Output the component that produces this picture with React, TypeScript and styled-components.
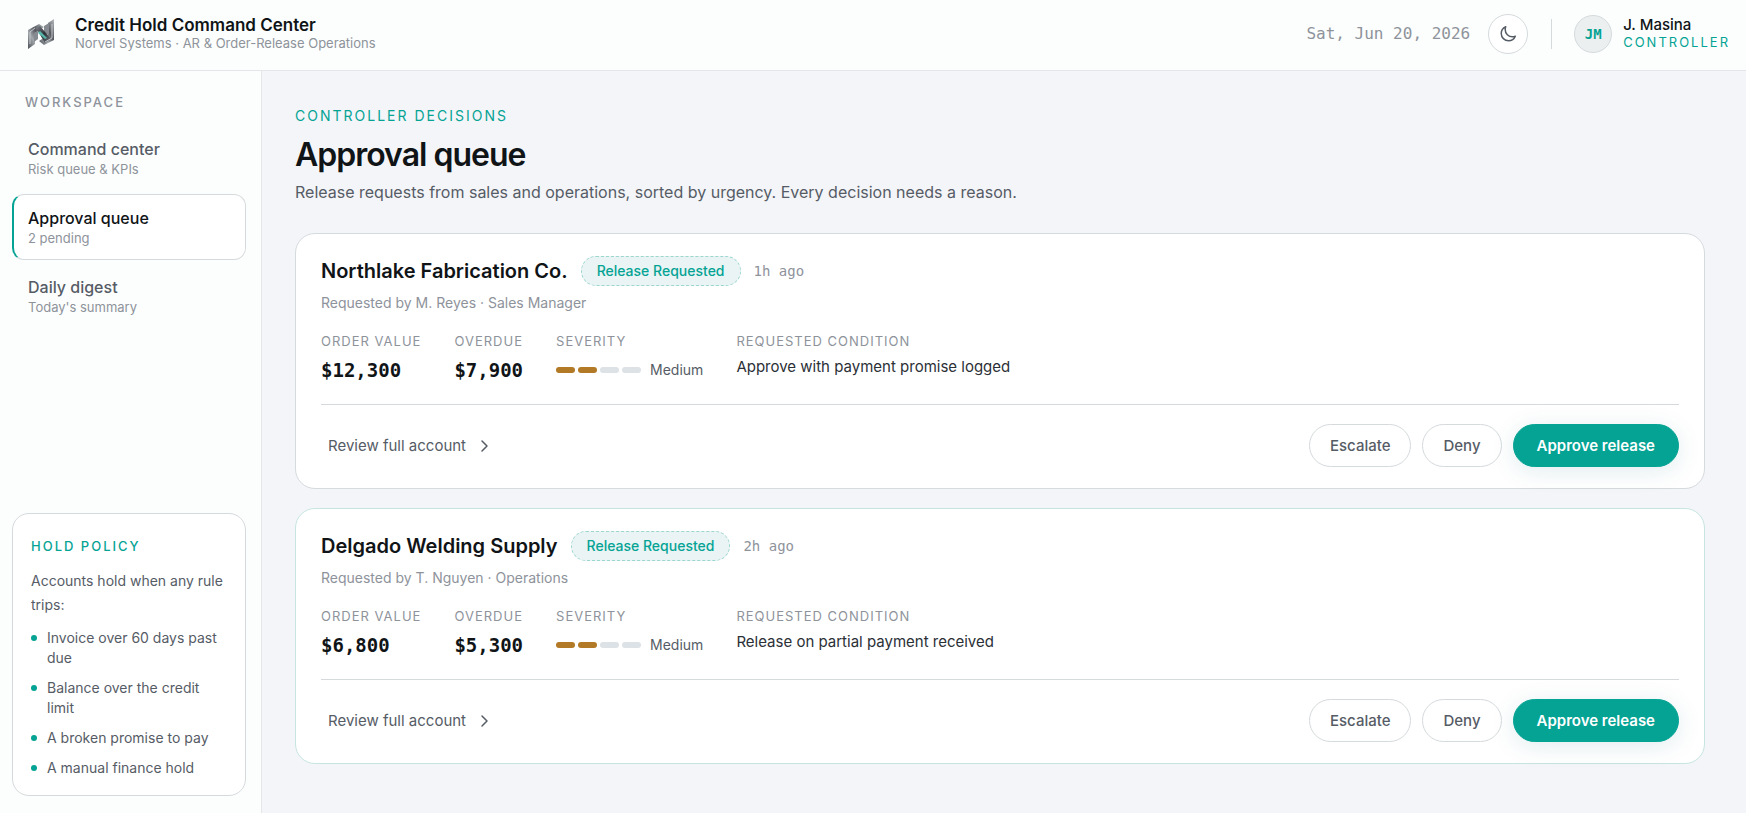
import React from "react";
import styled, { createGlobalStyle } from "styled-components";

const teal = "#05a394";
const ink = "#101417";
const slate = "#565c66";
const mute = "#8e939b";
const line = "#d5dadd";
const mono = `"DejaVu Sans Mono", "Liberation Mono", monospace`;

const GlobalStyle = createGlobalStyle`
  *, *::before, *::after { box-sizing: border-box; }
  body {
    margin: 0;
    background: #f4f5f8;
    color: ${ink};
    font-family: Inter, "Liberation Sans", sans-serif;
    font-size: 15px;
    line-height: 20px;
  }
  h1, h2, p, ul, dl, dd { margin: 0; padding: 0; }
  ul { list-style: none; }
  button { font: inherit; cursor: pointer; }
`;

const Shell = styled.div`
  min-height: 100vh;
  display: flex;
  flex-direction: column;
`;

const TopBar = styled.header`
  display: flex;
  align-items: center;
  justify-content: space-between;
  padding: 14px 16px 16px 25px;
  background: #fcfefd;
  border-bottom: 1px solid #e4e6ea;
`;

const Brand = styled.div`
  display: flex;
  align-items: center;
  gap: 18px;
`;

const NameBlock = styled.div`
  padding-bottom: 2px;
`;

const BrandName = styled.div`
  font-size: 17px;
  line-height: 20px;
  font-weight: 600;
`;

const BrandSub = styled.div`
  font-size: 13px;
  line-height: 16px;
  color: ${mute};
`;

const TopRight = styled.div`
  display: flex;
  align-items: center;
`;

const Today = styled.time`
  margin-right: 18px;
  font-family: ${mono};
  font-size: 16px;
  color: ${mute};
`;

const ThemeToggle = styled.button`
  display: grid;
  place-items: center;
  width: 40px;
  height: 40px;
  padding: 0;
  color: ${slate};
  background: #fff;
  border: 1px solid ${line};
  border-radius: 50%;
`;

const Divider = styled.div`
  width: 1px;
  height: 30px;
  margin: 0 22px 0 23px;
  background: ${line};
`;

const Avatar = styled.div`
  display: grid;
  place-items: center;
  width: 38px;
  height: 38px;
  margin-right: 11px;
  font-family: ${mono};
  font-size: 14px;
  font-weight: 700;
  color: ${teal};
  background: #eceff0;
  border: 1px solid ${line};
  border-radius: 50%;
`;

const UserName = styled.div`
  font-size: 15px;
  line-height: 18px;
  font-weight: 500;
`;

const UserRole = styled.div`
  font-size: 13px;
  line-height: 16px;
  letter-spacing: 2px;
  text-transform: uppercase;
  color: ${teal};
`;

const Body = styled.div`
  flex: 1;
  display: flex;
`;

const Sidebar = styled.aside`
  flex: 0 0 262px;
  display: flex;
  flex-direction: column;
  padding: 21px 15px 17px 12px;
  background: #fcfefd;
  border-right: 1px solid #e4e6ea;
`;

const SidebarLabel = styled.div`
  padding: 0 13px;
  margin-bottom: 13px;
  font-size: 13px;
  line-height: 20px;
  font-weight: 500;
  letter-spacing: 2px;
  text-transform: uppercase;
  color: ${mute};
`;

const Nav = styled.nav`
  display: flex;
  flex-direction: column;
  gap: 3px;
`;

const NavItem = styled.a<{ $active?: boolean }>`
  display: block;
  padding: 12px 14px;
  color: ${(p) => (p.$active ? ink : slate)};
  text-decoration: none;
  background: ${(p) => (p.$active ? "#fff" : "transparent")};
  border: 1px solid ${(p) => (p.$active ? line : "transparent")};
  border-left: 2px solid ${(p) => (p.$active ? teal : "transparent")};
  border-radius: 12px;
`;

const NavTitle = styled.div`
  font-size: 16px;
  line-height: 22px;
  font-weight: 500;
`;

const NavHint = styled.div`
  font-size: 13px;
  line-height: 18px;
  color: ${mute};
`;

const Policy = styled.section`
  margin-top: auto;
  padding: 22px 18px 17px;
  color: ${slate};
  font-size: 14px;
  background: #fff;
  border: 1px solid ${line};
  border-radius: 17px;
`;

const PolicyTitle = styled.h2`
  margin-bottom: 13px;
  font-size: 13px;
  line-height: 20px;
  font-weight: 500;
  letter-spacing: 2px;
  text-transform: uppercase;
  color: ${teal};
`;

const PolicyIntro = styled.p`
  margin-bottom: 11px;
  line-height: 24px;
`;

const PolicyList = styled.ul`
  display: grid;
  gap: 10px;
`;

const PolicyRule = styled.li`
  display: flex;
  gap: 10px;
  line-height: 20px;

  &::before {
    content: "";
    flex: 0 0 6px;
    height: 6px;
    margin-top: 7px;
    background: ${teal};
    border-radius: 50%;
  }
`;

const Main = styled.main`
  flex: 1;
  min-width: 0;
  padding: 35px 41px 48px 33px;
`;

const Eyebrow = styled.p`
  margin-bottom: 10px;
  font-size: 14px;
  line-height: 20px;
  letter-spacing: 2px;
  text-transform: uppercase;
  color: ${teal};
`;

const Title = styled.h1`
  margin-bottom: 6px;
  font-size: 32px;
  line-height: 38px;
  font-weight: 600;
  letter-spacing: -1px;
`;

const Lede = styled.p`
  margin-bottom: 29px;
  font-size: 16px;
  line-height: 24px;
  color: ${slate};
`;

const Queue = styled.div`
  display: grid;
  gap: 19px;
`;

const Card = styled.article<{ $accent?: boolean }>`
  padding: 22px 25px 21px;
  background: #fff;
  border: 1px solid ${(p) => (p.$accent ? "#c6e5e0" : line)};
  border-radius: 20px;
`;

const CardHead = styled.div`
  display: flex;
  align-items: center;
  gap: 13px;
`;

const Customer = styled.h2`
  font-size: 20px;
  line-height: 26px;
  font-weight: 600;
`;

const Status = styled.span`
  padding: 4px 15px;
  font-size: 14px;
  line-height: 20px;
  font-weight: 500;
  color: ${teal};
  background: #eaf4f5;
  border: 1px dashed #9bd6cf;
  border-radius: 15px;
`;

const Age = styled.span`
  font-family: ${mono};
  font-size: 14px;
  color: ${mute};
`;

const Requester = styled.p`
  margin: 7px 0 18px;
  font-size: 14px;
  line-height: 20px;
  color: ${mute};
`;

const Facts = styled.dl`
  display: flex;
  gap: 33px;
  padding-bottom: 21px;
  border-bottom: 1px solid ${line};
`;

const FactLabel = styled.dt`
  margin-bottom: 6px;
  font-size: 13px;
  line-height: 20px;
  letter-spacing: 1px;
  text-transform: uppercase;
  color: ${mute};
`;

const Money = styled.dd`
  font-family: ${mono};
  font-size: 19px;
  line-height: 26px;
  font-weight: 700;
`;

const Severity = styled.dd`
  display: flex;
  align-items: center;
  gap: 3px;
  line-height: 26px;
`;

const Tick = styled.i<{ $on: boolean }>`
  width: 19px;
  height: 6px;
  background: ${(p) => (p.$on ? "#b27a26" : "#dde2e6")};
  border-radius: 3px;
`;

const SeverityName = styled.span`
  margin-left: 6px;
  font-size: 14px;
  color: ${slate};
`;

const Condition = styled.dd`
  font-size: 15px;
  line-height: 20px;
  color: #2b3036;
`;

const CardFoot = styled.div`
  display: flex;
  align-items: center;
  justify-content: space-between;
  padding-top: 19px;
`;

const ReviewLink = styled.a`
  display: flex;
  align-items: center;
  gap: 10px;
  padding: 0 7px;
  color: ${slate};
  text-decoration: none;
`;

const Actions = styled.div`
  display: flex;
  gap: 11px;
`;

const Action = styled.button<{ $primary?: boolean }>`
  height: 43px;
  padding: 0 ${(p) => (p.$primary ? 23 : 20)}px;
  font-weight: ${(p) => (p.$primary ? 600 : 500)};
  color: ${(p) => (p.$primary ? "#fff" : slate)};
  background: ${(p) => (p.$primary ? teal : "#fff")};
  border: 1px solid ${(p) => (p.$primary ? teal : line)};
  border-radius: 22px;
  box-shadow: ${(p) => (p.$primary ? "0 4px 24px rgba(5, 100, 120, 0.12)" : "none")};
`;

function Logo() {
  return (
    <svg width="32" height="32" viewBox="0 0 32 32" aria-hidden="true">
      <defs>
        <linearGradient id="steel" x1="0" y1="1" x2="1" y2="0">
          <stop offset="0" stopColor="#4a4f55" />
          <stop offset="0.35" stopColor="#a3a8ad" />
          <stop offset="0.6" stopColor="#55595f" />
          <stop offset="1" stopColor="#b9bdc1" />
        </linearGradient>
        <linearGradient id="steelDark" x1="0" y1="0" x2="1" y2="1">
          <stop offset="0" stopColor="#80868c" />
          <stop offset="0.5" stopColor="#2b3036" />
          <stop offset="1" stopColor="#777c82" />
        </linearGradient>
      </defs>
      <path d="M3 31V12L14 6l5 3-9 6v11z" fill="url(#steel)" />
      <path d="M29 1v21l-10 5-5-4 9-6V5z" fill="url(#steel)" />
      <path d="M9 15l4-2v8l-4 3zM19 8l5-3v11l-5 2z" fill="#868b91" />
      <path d="M11 10l4-2 11 13-6 4z" fill="url(#steelDark)" />
      <path d="M5 14v12M10 10l-5 4M27 6v14l-7 4" fill="none" stroke="#c4c8cb" />
      <path d="M15 13l7 7-2 1-7-6z" fill="#56b5a8" />
    </svg>
  );
}

function MoonIcon() {
  return (
    <svg width="18" height="18" viewBox="0 0 24 24" fill="none" stroke="currentColor" strokeWidth="2" strokeLinecap="round" strokeLinejoin="round" aria-hidden="true">
      <path d="M21.75 15A9.7 9.7 0 0 1 18 15.75c-5.4 0-9.75-4.35-9.75-9.75 0-1.33.27-2.6.75-3.75A9.75 9.75 0 0 0 3 11.25C3 16.64 7.36 21 12.75 21a9.75 9.75 0 0 0 9-6z" />
    </svg>
  );
}

function ChevronIcon() {
  return (
    <svg width="16" height="16" viewBox="0 0 16 16" fill="none" stroke="currentColor" strokeWidth="1.5" strokeLinecap="round" strokeLinejoin="round" aria-hidden="true">
      <path d="M6 3l5 5-5 5" />
    </svg>
  );
}

const navItems = [
  { title: "Command center", hint: "Risk queue & KPIs" },
  { title: "Approval queue", hint: "2 pending", active: true },
  { title: "Daily digest", hint: "Today's summary" },
];

const rules = [
  "Invoice over 60 days past due",
  "Balance over the credit limit",
  "A broken promise to pay",
  "A manual finance hold",
];

const requests = [
  {
    customer: "Northlake Fabrication Co.",
    age: "1h ago",
    requester: "M. Reyes · Sales Manager",
    order: "$12,300",
    overdue: "$7,900",
    condition: "Approve with payment promise logged",
    accent: false,
  },
  {
    customer: "Delgado Welding Supply",
    age: "2h ago",
    requester: "T. Nguyen · Operations",
    order: "$6,800",
    overdue: "$5,300",
    condition: "Release on partial payment received",
    accent: true,
  },
];

export default function App() {
  return (
    <Shell>
      <GlobalStyle />
      <TopBar>
        <Brand>
          <Logo />
          <NameBlock>
            <BrandName>Credit Hold Command Center</BrandName>
            <BrandSub>Norvel Systems · AR &amp; Order-Release Operations</BrandSub>
          </NameBlock>
        </Brand>
        <TopRight>
          <Today dateTime="2026-06-20">Sat, Jun 20, 2026</Today>
          <ThemeToggle type="button" aria-label="Switch to dark theme">
            <MoonIcon />
          </ThemeToggle>
          <Divider />
          <Avatar>JM</Avatar>
          <NameBlock>
            <UserName>J. Masina</UserName>
            <UserRole>Controller</UserRole>
          </NameBlock>
        </TopRight>
      </TopBar>
      <Body>
        <Sidebar>
          <SidebarLabel>Workspace</SidebarLabel>
          <Nav aria-label="Workspace">
            {navItems.map((item) => (
              <NavItem key={item.title} href="#" $active={item.active} aria-current={item.active ? "page" : undefined}>
                <NavTitle>{item.title}</NavTitle>
                <NavHint>{item.hint}</NavHint>
              </NavItem>
            ))}
          </Nav>
          <Policy>
            <PolicyTitle>Hold policy</PolicyTitle>
            <PolicyIntro>Accounts hold when any rule trips:</PolicyIntro>
            <PolicyList>
              {rules.map((rule) => (
                <PolicyRule key={rule}>{rule}</PolicyRule>
              ))}
            </PolicyList>
          </Policy>
        </Sidebar>
        <Main>
          <Eyebrow>Controller decisions</Eyebrow>
          <Title>Approval queue</Title>
          <Lede>Release requests from sales and operations, sorted by urgency. Every decision needs a reason.</Lede>
          <Queue>
            {requests.map((r) => (
              <Card key={r.customer} $accent={r.accent}>
                <CardHead>
                  <Customer>{r.customer}</Customer>
                  <Status>Release Requested</Status>
                  <Age>{r.age}</Age>
                </CardHead>
                <Requester>Requested by {r.requester}</Requester>
                <Facts>
                  <div>
                    <FactLabel>Order value</FactLabel>
                    <Money>{r.order}</Money>
                  </div>
                  <div>
                    <FactLabel>Overdue</FactLabel>
                    <Money>{r.overdue}</Money>
                  </div>
                  <div>
                    <FactLabel>Severity</FactLabel>
                    <Severity>
                      {[1, 2, 3, 4].map((n) => (
                        <Tick key={n} $on={n <= 2} />
                      ))}
                      <SeverityName>Medium</SeverityName>
                    </Severity>
                  </div>
                  <div>
                    <FactLabel>Requested condition</FactLabel>
                    <Condition>{r.condition}</Condition>
                  </div>
                </Facts>
                <CardFoot>
                  <ReviewLink href="#">
                    Review full account
                    <ChevronIcon />
                  </ReviewLink>
                  <Actions>
                    <Action type="button">Escalate</Action>
                    <Action type="button">Deny</Action>
                    <Action type="button" $primary>
                      Approve release
                    </Action>
                  </Actions>
                </CardFoot>
              </Card>
            ))}
          </Queue>
        </Main>
      </Body>
    </Shell>
  );
}
